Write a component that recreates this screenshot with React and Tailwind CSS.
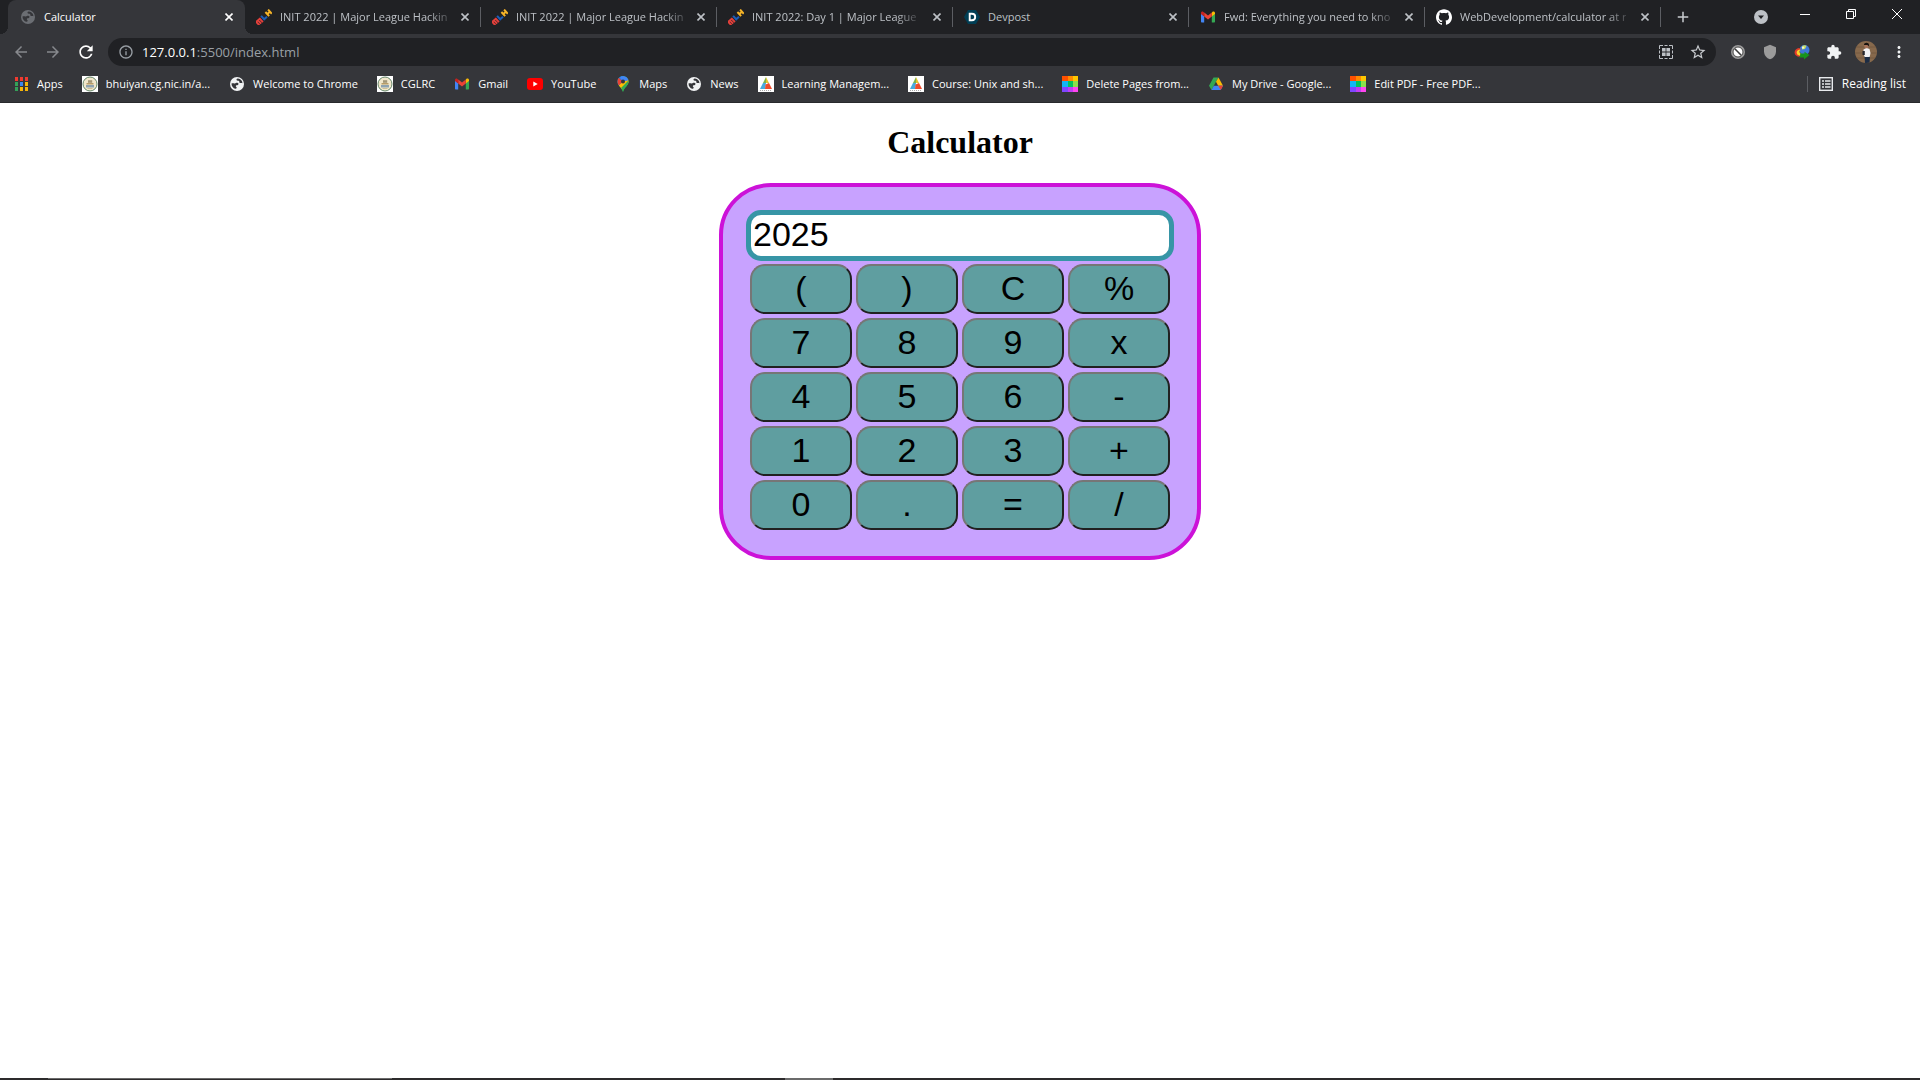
import { useState } from 'react';
import { SiGithub } from 'react-icons/si';
import { MdStarBorder, MdExtension, MdMoreVert, MdArrowBack, MdArrowForward, MdRefresh, MdInfoOutline, MdAdd, MdShield } from 'react-icons/md';

/* ---------- favicons ---------- */

function GlobeIcon({ color, size = 16 }) {
  return (
    <svg width={size} height={size} viewBox="0 0 16 16">
      <circle cx="8" cy="8" r="7" fill={color} />
      <path d="M2.500 7.500C3.500 7 4.500 7.200 5.500 7.400c1.300.3 1.500-1 3-.6 1.400.3 1.200 1.900.4 2.300-.8.500-1.900 0-2.100 1-.1.900 1 .9.900 1.700-.1.600-.9 1-1.500 1C4.500 12.300 2.400 10.500 2.500 7.500z" fill="#35363a" />
      <path d="M9 2.600C7.500 2.500 7 4 8 4.600c.9.400 1.200-.3 2 .3.700.6 0 1.400.8 2 .7.500 1.500-.2 2.700.3C13.300 4.700 11.500 2.800 9 2.600z" fill="#35363a" />
    </svg>
  );
}

function MlhIcon() {
  return (
    <svg width="16" height="16" viewBox="0 0 16 16" fill="none">
      <g transform="translate(8 8) rotate(-42)">
        <path d="M-9 3v-5M-6.600 3v-4.500M-4.200 3v-5M-10-1.600h6.600" stroke="#e4403b" strokeWidth="1.900" />
        <path d="M-1.400-2.800v4.600h3.800" stroke="#1d5db8" strokeWidth="2" />
        <path d="M4.400-2.800v5.600M8-2.800v5.600M4.400 0h3.600" stroke="#f5b428" strokeWidth="2" />
      </g>
    </svg>
  );
}

function DevpostIcon() {
  return (
    <svg width="16" height="16" viewBox="0 0 16 16">
      <path d="M4 1h8l4 7-4 7H4L0 8z" fill="#003e54" />
      <path d="M5.700 4.800h2.200c2 0 3.300 1.100 3.300 3.200s-1.400 3.200-3.300 3.200H5.700z" fill="none" stroke="#fff" strokeWidth="1.900" />
    </svg>
  );
}

function GmailIcon() {
  return (
    <svg width="16" height="16" viewBox="0 0 16 16">
      <path d="M1 4.500v8.300c0 .4.300.7.700.7h2.500V7.200z" fill="#4285f4" />
      <path d="M15 4.500v8.300c0 .4-.3.700-.7.700h-2.500V7.200z" fill="#34a853" />
      <path d="M11.800 3.700v3.700L15 5V4c0-1.400-1.500-2-2.500-1.200z" fill="#fbbc04" />
      <path d="M4.200 7.500V3.600L8 6.500l3.800-2.900v3.900L8 10.400z" fill="#ea4335" />
      <path d="M1 4v1l3.200 2.500V3.600l-.8-.7C2.400 2.100 1 2.700 1 4z" fill="#c5221f" />
    </svg>
  );
}

function AppsIcon() {
  const colors = ['#f03b30', '#f03b30', '#f03b30', '#34a058', '#3b86f0', '#f5b50a', '#34a058', '#f5b50a', '#f5b50a'];
  return (
    <svg width="16" height="16" viewBox="0 0 16 16">
      {colors.map((c, i) => (
        <rect key={i} x={2 + (i % 3) * 5} y={1 + Math.floor(i / 3) * 5} width="3" height="4" fill={c} />
      ))}
    </svg>
  );
}

function SealIcon() {
  return (
    <svg width="16" height="16" viewBox="0 0 16 16">
      <rect width="16" height="16" fill="#fff" />
      <circle cx="8" cy="8" r="7" fill="#f1e7cb" stroke="#64876a" strokeWidth="1" />
      <path d="M6 4.200h4.200v2.600H6z" fill="#a39676" />
      <path d="M4.500 7h7v1.500h-7z" fill="#b79c68" />
      <path d="M4 9h8v2.500H4z" fill="#8fa3b0" />
      <path d="M5.500 12.500h5" stroke="#cfc194" />
    </svg>
  );
}

function YouTubeIcon() {
  return (
    <svg width="16" height="16" viewBox="0 0 16 16">
      <rect y="2" width="16" height="12" rx="3" fill="#f00" />
      <path d="M6.300 5.500v5L10.700 8z" fill="#fff" />
    </svg>
  );
}

function MapsIcon() {
  return (
    <svg width="16" height="16" viewBox="0 0 16 16">
      <defs>
        <clipPath id="pin">
          <path d="M8 0a5.500 5.500 0 0 0-5.500 5.500C2.500 9.500 6.500 11 8 16c1.500-5 5.500-6.500 5.500-10.500A5.500 5.500 0 0 0 8 0z" />
        </clipPath>
      </defs>
      <g clipPath="url(#pin)">
        <rect width="16" height="16" fill="#34a853" />
        <path d="M0 9L14 3v4L6 14z" fill="#fbbc04" />
        <path d="M14 4v12H7.500L6 12z" fill="#34a853" />
        <path d="M0 0h7l1 5.500L3 10 0 9z" fill="#1a73e8" />
        <path d="M0 1.500l4 .5 4 3.500-5 4.500z" fill="#ea4335" />
        <path d="M6 0h9v4L8 5.500 5 2z" fill="#4285f4" />
      </g>
      <circle cx="8" cy="5.500" r="2" fill="#35363a" />
    </svg>
  );
}

function PyramidIcon() {
  return (
    <svg width="16" height="16" viewBox="0 0 16 16">
      <rect width="16" height="16" fill="#fff" />
      <path d="M8 1L5 7h3z" fill="#7db34a" />
      <path d="M8 1l3 6H8z" fill="#e3c22f" />
      <path d="M5 7h3l-1 6H2z" fill="#49a9dc" />
      <path d="M7.500 8.500L11 7l3 6H7z" fill="#ee4b2b" />
      <path d="M2 14.500h12" stroke="#aaa" strokeDasharray="1 1" />
    </svg>
  );
}

function PdfIcon() {
  const cells = [
    ['#ff5000', 0, 0, 6], ['#ff8a00', 6, 0, 5], ['#ffc700', 11, 0, 5],
    ['#12b5f5', 0, 5, 6], ['#00c45c', 6, 5, 5], ['#8ae04c', 11, 5, 5],
    ['#7f46ff', 0, 11, 6], ['#c13cf5', 6, 11, 5], ['#ff46f0', 11, 11, 5],
  ];
  return (
    <svg width="16" height="16" viewBox="0 0 16 16" shapeRendering="crispEdges">
      {cells.map(([fill, x, y, w]) => (
        <rect key={fill} x={x} y={y} width={w} height="6" fill={fill} />
      ))}
    </svg>
  );
}

function DriveIcon() {
  return (
    <svg width="16" height="16" viewBox="0 0 16 16">
      <path d="M5.500 1.500h5L8 5.800 3.500 14 1 9.700z" fill="#34a853" />
      <path d="M10.500 1.500L15 9.700h-4.800L8 5.800z" fill="#fbbc04" />
      <path d="M5.800 9.700H15l-2.400 4.300H3.500z" fill="#4285f4" />
      <path d="M12.800 14L10.200 9.700H15z" fill="#ea4335" />
    </svg>
  );
}

/* ---------- toolbar icons ---------- */

function CloseIcon() {
  return (
    <svg width="8" height="8" viewBox="0 0 8 8" stroke="currentColor" strokeWidth="1.600">
      <path d="M.5.500l7 7M7.500.500l-7 7" />
    </svg>
  );
}

function QrIcon() {
  return (
    <svg width="16" height="16" viewBox="0 0 16 16" fill="#bdc1c6">
      <path d="M1.500 5V1.500H5M11 1.500h3.500V5M14.500 11v3.500H11M5 14.500H1.500V11M6.500 1.500h3M6.500 14.500h3M1.500 6.500v3M14.500 6.500v3" fill="none" stroke="#bdc1c6" />
      <path d="M4 4h3.600v3.600H4zM8.400 4H12v3.600H8.400zM4 8.400h3.600V12H4zM8.400 8.400H12V12H8.400z" />
    </svg>
  );
}

function BlockerIcon() {
  return (
    <svg width="16" height="16" viewBox="0 0 16 16">
      <circle cx="8" cy="8" r="7" fill="#9b9b9b" />
      <circle cx="8" cy="8" r="5" fill="#fff" stroke="#4a4a4a" strokeWidth="1" />
      <path d="M4.800 4.800l6.400 6.400" stroke="#3c3c3c" strokeWidth="1.600" />
    </svg>
  );
}

function IdmIcon() {
  return (
    <svg width="16" height="16" viewBox="0 0 16 16">
      <circle cx="10.500" cy="6" r="5" fill="#3f78d8" />
      <path d="M8 2.500c1.500-1.500 3.500-1.500 4.500-.5l-1.500 3-3 .5z" fill="#c9dc5c" />
      <circle cx="9" cy="3.600" r="1.200" fill="#fff" opacity=".7" />
      <path d="M5 4C2 4.500 0 7 .8 9.800 1.500 12 4 13 6 12.500L8 10C5 10 4 7 7 5z" fill="#e33a2a" />
      <path d="M5.500 5.500C3 6 2 8 3 10c1 1.500 3 2 5 1L6 9c-1-1-.5-2.500.5-3z" fill="#f7d22c" />
      <path d="M6 9.500h4.500V7.800L15.500 11 10 15.500v-2H5c1-1 1.500-2.500 1-4z" fill="#17941d" />
    </svg>
  );
}

function Avatar() {
  return (
    <svg width="22" height="22" viewBox="0 0 22 22">
      <defs>
        <clipPath id="avatar"><circle cx="11" cy="11" r="11" /></clipPath>
      </defs>
      <g clipPath="url(#avatar)">
        <rect width="22" height="22" fill="#87694c" />
        <path d="M0 6h22M0 12h22M0 17h22" stroke="#755a40" />
        <path d="M9.500 15h5.500l-.5 7h-4.500z" fill="#1c2c44" />
        <path d="M8.500 8.500l3-1.500 3 1 1 4-.8 4h-5l-1-2.500z" fill="#f1f1f4" />
        <path d="M7.500 10h2.300v4H7.500z" fill="#26262c" />
        <circle cx="11.500" cy="5" r="2.300" fill="#a8745a" />
        <path d="M9 4c0-3 5-3 5 0l-.5 1.500-1-1.500z" fill="#17120f" />
      </g>
    </svg>
  );
}

function ReadingListIcon() {
  return (
    <svg width="16" height="16" viewBox="0 0 16 16" fill="none" stroke="#e8eaed">
      <rect x="1.700" y="1.700" width="12.600" height="12.600" strokeWidth="1.400" />
      <path d="M4 5h2M7 5h5.500M4 8h2M7 8h5.500M4 11h2M7 11h5.500" strokeWidth="1.600" />
    </svg>
  );
}

/* ---------- data ---------- */

const tabs = [
  { title: 'INIT 2022 | Major League Hackin', icon: <MlhIcon /> },
  { title: 'INIT 2022 | Major League Hackin', icon: <MlhIcon /> },
  { title: 'INIT 2022: Day 1 | Major League', icon: <MlhIcon /> },
  { title: 'Devpost', icon: <DevpostIcon />, short: true },
  { title: 'Fwd: Everything you need to kno', icon: <GmailIcon /> },
  { title: 'WebDevelopment/calculator at r', icon: <SiGithub size={16} color="#fff" /> },
];

const bookmarks = [
  { label: 'Apps', icon: <AppsIcon /> },
  { label: 'bhuiyan.cg.nic.in/a...', icon: <SealIcon /> },
  { label: 'Welcome to Chrome', icon: <GlobeIcon color="#f1f3f4" /> },
  { label: 'CGLRC', icon: <SealIcon /> },
  { label: 'Gmail', icon: <GmailIcon /> },
  { label: 'YouTube', icon: <YouTubeIcon /> },
  { label: 'Maps', icon: <MapsIcon /> },
  { label: 'News', icon: <GlobeIcon color="#f1f3f4" /> },
  { label: 'Learning Managem...', icon: <PyramidIcon /> },
  { label: 'Course: Unix and sh...', icon: <PyramidIcon /> },
  { label: 'Delete Pages from...', icon: <PdfIcon /> },
  { label: 'My Drive - Google...', icon: <DriveIcon /> },
  { label: 'Edit PDF - Free PDF...', icon: <PdfIcon /> },
];

const keys = ['(', ')', 'C', '%', '7', '8', '9', 'x', '4', '5', '6', '-', '1', '2', '3', '+', '0', '.', '=', '/'];

/* ---------- browser chrome ---------- */

function TabStrip() {
  return (
    <div className="flex h-[34px] bg-[#202124] pl-2">
      <div className="relative flex w-[237px] shrink-0 items-center rounded-t-lg bg-[#35363a] pr-2 pl-3 text-white">
        {/* flared corners at the foot of the active tab */}
        <span className="absolute bottom-0 -left-2 size-2 bg-[radial-gradient(circle_at_0_0,#202124_8px,#35363a_8px)]" />
        <span className="absolute -right-2 bottom-0 size-2 bg-[radial-gradient(circle_at_100%_0,#202124_8px,#35363a_8px)]" />
        <GlobeIcon color="#6b6e73" />
        <span className="ml-2 flex-1">Calculator</span>
        <button aria-label="Close tab" className="flex size-4 items-center justify-center"><CloseIcon /></button>
      </div>
      {tabs.map((tab, i) => (
        <div key={i} className="flex w-[236px] min-w-0 items-center text-[#bdc1c6]">
          <div className="flex min-w-0 flex-1 items-center pr-[7px] pl-[11px]">
            <span className="shrink-0">{tab.icon}</span>
            <span className="ml-2 min-w-0 flex-1">
              <span className={tab.short ? 'whitespace-nowrap' : 'inline-block whitespace-nowrap [mask-image:linear-gradient(to_right,#000_calc(100%-20px),#0004)]'}>{tab.title}</span>
            </span>
            <button aria-label="Close tab" className="ml-1 flex size-4 shrink-0 items-center justify-center"><CloseIcon /></button>
          </div>
          <span className="h-5 w-px bg-[#5c5e63]" />
        </div>
      ))}
      <button aria-label="New tab" className="ml-[13px] flex items-center text-[#c8cbcf]"><MdAdd size={18} /></button>
      <div className="ml-auto flex items-center text-white">
        <button aria-label="Search tabs" className="flex w-[42px] justify-center">
          <svg width="14" height="14" viewBox="0 0 14 14">
            <circle cx="7" cy="7" r="7" fill="#bdc1c6" />
            <path d="M4 5.500h6L7 9z" fill="#202124" />
          </svg>
        </button>
        <button aria-label="Minimize" className="flex h-7 w-[46px] items-center justify-center self-start">
          <svg width="10" height="10" stroke="#fff"><path d="M0 5.500h10" /></svg>
        </button>
        <button aria-label="Restore" className="flex h-7 w-[46px] items-center justify-center self-start">
          <svg width="10" height="10" fill="none" stroke="#fff"><path d="M.5 2.500h7v7h-7zM2.500 2.500v-2h7v7h-2" /></svg>
        </button>
        <button aria-label="Close" className="flex h-7 w-[46px] items-center justify-center self-start">
          <svg width="10" height="10" stroke="#fff"><path d="M0 0l10 10M10 0L0 10" /></svg>
        </button>
      </div>
    </div>
  );
}

function Toolbar() {
  return (
    <div className="flex h-9 items-center bg-[#35363a] px-3">
      <div className="flex gap-[14px]">
        <button aria-label="Back" className="text-[#87898d]"><MdArrowBack size={18} /></button>
        <button aria-label="Forward" className="text-[#87898d]"><MdArrowForward size={18} /></button>
        <button aria-label="Reload" className="text-white"><MdRefresh size={20} /></button>
      </div>
      <div className="ml-3 flex h-7 flex-1 items-center rounded-full bg-[#202124] pr-[9px] pl-[10px]">
        <MdInfoOutline size={16} color="#9aa0a6" />
        <span className="ml-2 flex-1 text-[13px] text-[#9aa0a6]"><span className="text-white">127.0.0.1</span>:5500/index.html</span>
        <button aria-label="Create QR code"><QrIcon /></button>
        <button aria-label="Bookmark this tab" className="ml-[15px] text-[#c8cbcf]"><MdStarBorder size={18} /></button>
      </div>
      <div className="ml-[14px] flex items-center gap-4 text-[#f1f3f4]">
        <button aria-label="Blocker"><BlockerIcon /></button>
        <button aria-label="Shield" className="text-[#9b9b9b]"><MdShield size={16} /></button>
        <button aria-label="Download manager"><IdmIcon /></button>
        <button aria-label="Extensions"><MdExtension size={16} /></button>
        <button aria-label="Profile" className="-mx-[3px]"><Avatar /></button>
        <button aria-label="Menu"><MdMoreVert size={18} /></button>
      </div>
    </div>
  );
}

function BookmarkBar() {
  return (
    <nav className="flex h-[33px] items-center border-b border-[#28292c] bg-[#35363a] pr-[14px] pb-1 pl-[13px] text-white">
      <div className="flex gap-[19px] whitespace-nowrap">
        {bookmarks.map((b) => (
          <a key={b.label} href="#" className="flex items-center gap-2">
            {b.icon}
            {b.label}
          </a>
        ))}
      </div>
      <span className="ml-auto h-4 w-px bg-[#5c5e63]" />
      <button className="ml-[10px] flex items-center gap-2 text-xs">
        <ReadingListIcon />
        Reading list
      </button>
    </nav>
  );
}

/* ---------- page ---------- */

function Calculator() {
  const [value, setValue] = useState('2025');

  const press = (key) => {
    if (key === 'C') {
      setValue('');
    } else if (key === '=') {
      try {
        setValue(String(Function(`return ${value.replaceAll('x', '*')}`)()));
      } catch {
        setValue('Error');
      }
    } else {
      setValue(value + key);
    }
  };

  return (
    <main className="flex flex-1 flex-col items-center">
      <h1 className="mt-[21px] mb-[22px] font-['Liberation_Serif','Times_New_Roman',serif] text-[32px] leading-[37px] font-bold">Calculator</h1>
      <div className="rounded-[52px] border-4 border-[#cc12d8] bg-[#c8a2ff] px-[23px] pt-[23px] pb-[26px] font-['Liberation_Sans',Arial,sans-serif] text-[34px] leading-10">
        <input
          aria-label="Result"
          className="block h-[51px] w-[428px] rounded-[15px] border-5 border-[#3795a6] bg-white px-[2px] pb-[2px]"
          value={value}
          onChange={(e) => setValue(e.target.value)}
        />
        <div className="mx-1 mt-[3px] grid grid-cols-4 gap-1">
          {keys.map((key) => (
            <button
              key={key}
              onClick={() => press(key)}
              className="h-[50px] w-[102px] rounded-[15px] border-2 border-t-[#767676] border-r-[#212121] border-b-[#212121] border-l-[#767676] bg-[#5f9ea0] pb-[2px]"
            >
              {key}
            </button>
          ))}
        </div>
      </div>
    </main>
  );
}

export default function App() {
  return (
    <div className="flex min-h-screen flex-col bg-white text-black">
      <header className="font-['Open_Sans','Segoe_UI',sans-serif] text-[11px] leading-4">
        <TabStrip />
        <Toolbar />
        <BookmarkBar />
      </header>
      <Calculator />
      {/* top edge of the taskbar */}
      <footer className="flex h-[2px] bg-[#2d2b2c] pl-12">
        <span className="w-[344px] border-t border-[#6b6b6b]" />
        <span className="ml-[393px] w-12 bg-[#6b6b6b]" />
      </footer>
    </div>
  );
}
